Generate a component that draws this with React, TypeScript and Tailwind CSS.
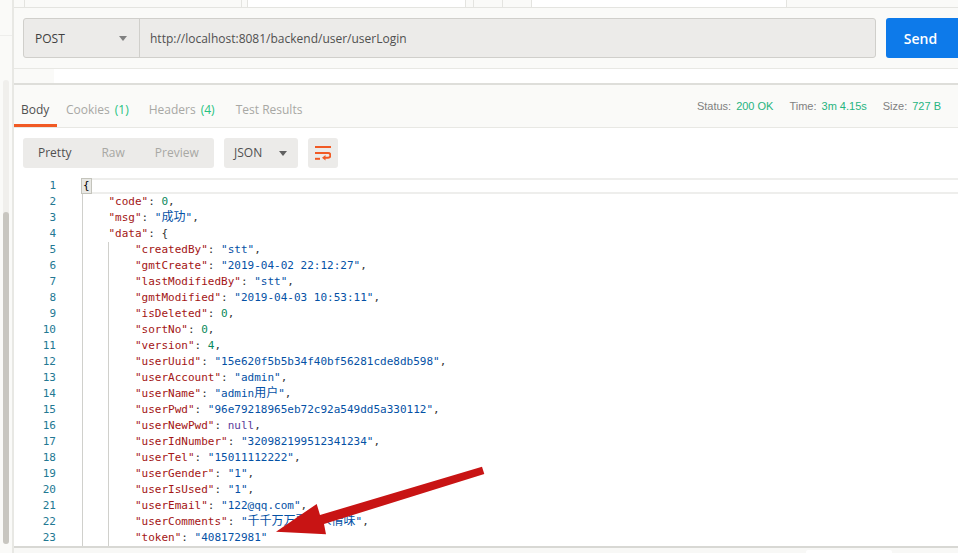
const Key = ({ children }: { children: React.ReactNode }) => <span className="text-[#a31515]">{children}</span>;
const Str = ({ children }: { children: React.ReactNode }) => <span className="text-[#0451a5]">{children}</span>;
const Num = ({ children }: { children: React.ReactNode }) => <span className="text-[#09885a]">{children}</span>;
const Cjk = ({ children }: { children: React.ReactNode }) => (
  <span className="text-[12px] leading-[1px]" style={{ fontFamily: '"Noto Sans CJK SC", sans-serif' }}>{children}</span>
);

type Row = { k?: string; v?: React.ReactNode; comma?: boolean; level: number; raw?: React.ReactNode };

const s = (t: string) => <Str>"{t}"</Str>;

const rows: Row[] = [
  { level: 0, raw: <span className="inline-block h-[14px] leading-[14px] pl-px pr-px bg-[#e8e8e4] outline outline-1 outline-[#c4c4bc]">{"{"}</span> },
  { level: 1, k: "code", v: <Num>0</Num>, comma: true },
  { level: 1, k: "msg", v: <Str>"<Cjk>成功</Cjk>"</Str>, comma: true },
  { level: 1, k: "data", v: <span>{"{"}</span> },
  { level: 2, k: "createdBy", v: s("stt"), comma: true },
  { level: 2, k: "gmtCreate", v: s("2019-04-02 22:12:27"), comma: true },
  { level: 2, k: "lastModifiedBy", v: s("stt"), comma: true },
  { level: 2, k: "gmtModified", v: s("2019-04-03 10:53:11"), comma: true },
  { level: 2, k: "isDeleted", v: <Num>0</Num>, comma: true },
  { level: 2, k: "sortNo", v: <Num>0</Num>, comma: true },
  { level: 2, k: "version", v: <Num>4</Num>, comma: true },
  { level: 2, k: "userUuid", v: s("15e620f5b5b34f40bf56281cde8db598"), comma: true },
  { level: 2, k: "userAccount", v: s("admin"), comma: true },
  { level: 2, k: "userName", v: <Str>"admin<Cjk>用户</Cjk>"</Str>, comma: true },
  { level: 2, k: "userPwd", v: s("96e79218965eb72c92a549dd5a330112"), comma: true },
  { level: 2, k: "userNewPwd", v: <span className="text-[#5c3d99]">null</span>, comma: true },
  { level: 2, k: "userIdNumber", v: s("320982199512341234"), comma: true },
  { level: 2, k: "userTel", v: s("15011112222"), comma: true },
  { level: 2, k: "userGender", v: s("1"), comma: true },
  { level: 2, k: "userIsUsed", v: s("1"), comma: true },
  { level: 2, k: "userEmail", v: s("122@qq.com"), comma: true },
  { level: 2, k: "userComments", v: <Str>"<Cjk>千千万万要有人情味</Cjk>"</Str>, comma: true },
  { level: 2, k: "token", v: s("408172981") },
];

function Caret({ className }: { className: string }) {
  return <span className={`w-0 h-0 border-l-[4px] border-r-[4px] border-t-[5px] border-l-transparent border-r-transparent ${className}`} />;
}

function CodeLine({ row, index }: { row: Row; index: number }) {
  const first = index === 0;
  return (
    <div className="flex h-4 leading-4">
      <div className="w-[68px] shrink-0 pr-[26px] text-right text-[#237893]">{index + 1}</div>
      <div className={`flex-1 flex whitespace-pre ${first ? "border-y-2 border-[#eeeeec] h-[16px] items-center" : ""}`}>
        {Array.from({ length: row.level }).map((_, i) => (
          <span key={i} className="w-[4ch] shrink-0 border-l border-[#d0d0cc]" />
        ))}
        {row.raw ? (
          row.raw
        ) : (
          <span className="text-[#333333]">
            <Key>"{row.k}"</Key>: {row.v}
            {row.comma ? "," : ""}
          </span>
        )}
      </div>
    </div>
  );
}

export default function App() {
  return (
    <div className="relative w-[958px] h-[553px] overflow-hidden flex bg-white" style={{ fontFamily: '"Open Sans", sans-serif' }}>
      <aside className="w-[14px] shrink-0 flex flex-col bg-[#fafaf8] border-r-2 border-[#e8e8e4]">
        <div className="h-[36px] border-b border-[#eeeeec]" />
        <div className="flex-1 pt-[44px] pl-[3px] pb-[9px]">
          <div className="w-[6px] h-full rounded-[3px] bg-[#f0efec] flex flex-col justify-end">
            <div className="h-[332px] rounded-[3px] bg-[#c8c6c0]" />
          </div>
        </div>
      </aside>

      <main className="flex-1 flex flex-col min-w-0">
        <div className="h-2 flex bg-[#fafaf8] border-b border-[#e4e4e0] pl-[10px] shrink-0">
          <div className="w-[218px] border-x border-[#e4e4e0]" />
          <div className="w-[5px]" />
          <div className="w-[219px] bg-white border-x border-[#e4e4e0]" />
          <div className="w-[7px]" />
          <div className="w-[30px] border-x border-[#e4e4e0]" />
          <div className="w-[29px] border-r border-[#e4e4e0]" />
          <div className="w-[255px] bg-white border-r border-[#e4e4e0]" />
        </div>

        <div className="h-[60px] shrink-0 bg-[#fafaf8] flex items-start pt-[10px] pl-[9px] gap-[10px]">
          <div className="w-[853px] h-10 flex bg-[#ecebe9] border border-[#d0cfcb] rounded-[3px] text-[12px] text-[#505050]">
            <div className="w-[116px] flex items-center justify-between pl-[11px] pr-[12px] pt-px border-r border-[#d0cfcb] text-[#404040] font-medium">
              <span>POST</span>
              <Caret className="border-t-[#808080]" />
            </div>
            <div className="flex-1 flex items-center pl-[10px] pt-px">http://localhost:8081/backend/user/userLogin</div>
          </div>
          <button className="w-[72px] h-10 bg-[#0d7aea] text-white text-[14px] font-semibold rounded-l-[3px] pr-[3px]">Send</button>
        </div>

        <div className="h-[17px] shrink-0 flex border-t border-b-2 border-t-[#e8e8e4] border-b-[#dededa] bg-white">
          <div className="w-[40px] bg-[#fafaf8]" />
        </div>

        <div className="h-[43px] shrink-0 flex items-stretch justify-between bg-[#fafaf8] border-b border-[#e8e8e4]">
          <div className="flex text-[12px] text-[#a8a8a4]">
            <div className="w-[43px] pl-[7px] flex items-center border-b-[3px] border-[#f15a24] text-[#505050] pt-[11px] h-[42px]">Body</div>
            <div className="ml-[9px] flex items-center mb-[2px] pt-[9px]">
              Cookies<span className="ml-[5px] text-[#26c281]">(1)</span>
            </div>
            <div className="ml-[20px] flex items-center mb-[2px] pt-[9px]">
              Headers<span className="ml-[5px] text-[#26c281]">(4)</span>
            </div>
            <div className="ml-[21px] flex items-center mb-[2px] pt-[9px]">Test Results</div>
          </div>
          <div className="flex items-center gap-[16px] pr-[17px] text-[11px] text-[#808080]" style={{ fontFamily: '"Liberation Sans", sans-serif' }}>
            <span>Status:<span className="ml-[5px] text-[#26b47f]">200 OK</span></span>
            <span>Time:<span className="ml-[5px] text-[#26b47f]">3m 4.15s</span></span>
            <span>Size:<span className="ml-[5px] text-[#26b47f]">727 B</span></span>
          </div>
        </div>

        <div className="h-[50px] shrink-0 flex items-start pt-[10px] pl-[9px] gap-[10px] text-[12px] bg-white">
          <div className="w-[191px] h-[30px] flex items-center bg-[#ecebe9] rounded-[3px] text-[#a8a8a4]">
            <span className="ml-[15px] text-[#505050]">Pretty</span>
            <span className="ml-[30px]">Raw</span>
            <span className="ml-[30px]">Preview</span>
          </div>
          <div className="w-[74px] h-[30px] flex items-center justify-between pl-[10px] pr-[11px] bg-[#ecebe9] rounded-[3px] text-[#505050]">
            <span>JSON</span>
            <Caret className="border-t-[#606060]" />
          </div>
          <div className="w-[30px] h-[30px] flex items-center justify-center bg-[#ecebe9] rounded-[3px]">
            <svg width="16" height="15" viewBox="0 0 16 15" fill="none" stroke="#f15a24" strokeWidth="2">
              <path d="M0 1h16" />
              <path d="M0 7h13a2.2 2.2 0 0 1 0 4.8H9" />
              <path d="M0 12.8h5" />
              <path d="M10.5 9v5.6L7 11.8z" fill="#f15a24" stroke="none" />
            </svg>
          </div>
        </div>

        <div className="flex-1 min-h-0 overflow-hidden text-[11px]" style={{ fontFamily: '"DejaVu Sans Mono", monospace' }}>
          {rows.map((r, i) => (
            <CodeLine key={i} row={r} index={i} />
          ))}
        </div>

        <div className="h-[7px] shrink-0 border-t-2 border-[#d8d8d4] bg-[#f8f8f6] flex justify-end items-end">
          <div className="w-[86px] h-[3px] bg-white mr-[66px] rounded-t-[2px]" />
        </div>
      </main>

      <svg className="absolute inset-0 pointer-events-none" width="958" height="553" viewBox="0 0 958 553">
        <polygon points="482,466.7 484.3,474 324,524 326,534.3 276,531.7 316.7,504 320,515" fill="#c81414" />
      </svg>
    </div>
  );
}
